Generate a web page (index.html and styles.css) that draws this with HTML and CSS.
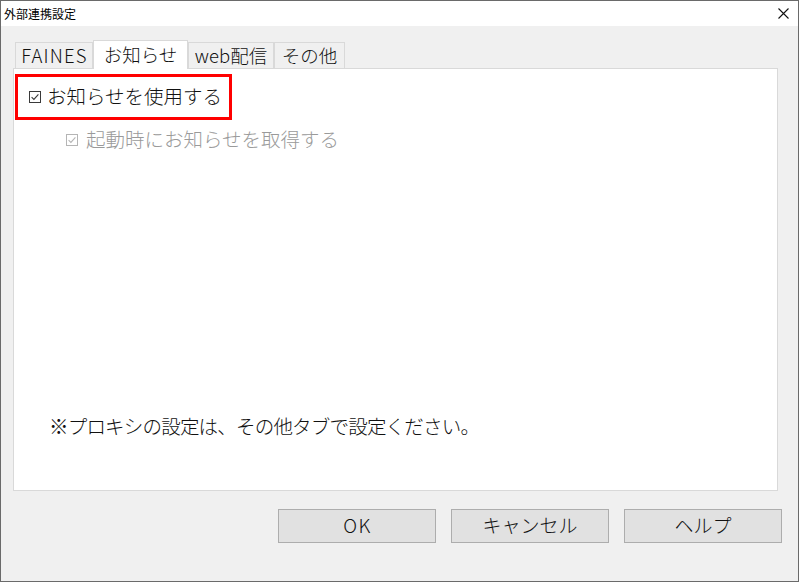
FILE: index.html
```html
<!DOCTYPE html>
<html lang="ja">
<head>
<meta charset="utf-8">
<title>外部連携設定</title>
<link rel="stylesheet" href="styles.css">
</head>
<body>
<div class="window">
  <div class="titlebar">
    <span class="title">外部連携設定</span>
    <svg class="close" width="11" height="11" viewBox="0 0 11 11"><path d="M0.5 0.5 L10.5 10.5 M10.5 0.5 L0.5 10.5" stroke="#111" stroke-width="1.1" fill="none"/></svg>
  </div>
  <div class="content">
    <div class="tabs">
      <div class="tab tab-faines">FAINES</div>
      <div class="tab tab-active">お知らせ</div>
      <div class="tab tab-web">web配信</div>
      <div class="tab tab-other">その他</div>
    </div>
    <div class="panel">
      <div class="highlight">
        <svg class="check" width="12" height="12" viewBox="0 0 12 12"><rect x="0.5" y="0.5" width="11" height="11" fill="none" stroke="currentColor"/><path d="M2.6 6.2 L4.9 8.4 L9.4 3.4" fill="none" stroke="currentColor" stroke-width="1.1"/></svg>
        <span>お知らせを使用する</span>
      </div>
      <div class="subrow">
        <svg class="check" width="12" height="12" viewBox="0 0 12 12"><rect x="0.5" y="0.5" width="11" height="11" fill="none" stroke="currentColor"/><path d="M2.6 6.2 L4.9 8.4 L9.4 3.4" fill="none" stroke="currentColor" stroke-width="1.1"/></svg>
        <span>起動時にお知らせを取得する</span>
      </div>
      <div class="note">※プロキシの設定は、その他タブで設定ください。</div>
    </div>
    <div class="buttons">
      <div class="btn btn-ok">OK</div>
      <div class="btn">キャンセル</div>
      <div class="btn">ヘルプ</div>
    </div>
  </div>
</div>
</body>
</html>
```
FILE: styles.css
```css
html, body {
  margin: 0;
  padding: 0;
  background: #f0f0f0;
}
body {
  font-family: "Noto Sans CJK JP", "Noto Sans", sans-serif;
  font-weight: 300;
  color: #000;
}
.window {
  width: 799px;
  height: 582px;
  box-sizing: border-box;
  border: 1px solid #6a6a6a;
  display: flex;
  flex-direction: column;
  background: #f0f0f0;
}
.titlebar {
  height: 25px;
  flex: 0 0 25px;
  background: #fff;
  display: flex;
  align-items: center;
  justify-content: space-between;
  padding: 0 9px 0 3px;
}
.title {
  font-size: 12px;
  line-height: 14px;
  font-weight: 400;
  color: #000;
}
.close {
  display: block;
}
.content {
  flex: 1;
  padding: 14px 0 0 12px;
  display: flex;
  flex-direction: column;
}
.tabs {
  height: 28px;
  display: flex;
  align-items: flex-end;
  margin-left: 2px;
}
.tab {
  box-sizing: border-box;
  height: 26px;
  border: 1px solid #d9d9d9;
  border-bottom: none;
  background: #f0f0f0;
  display: flex;
  align-items: center;
  justify-content: center;
  font-size: 18.5px;
  line-height: 24px;
  padding-bottom: 1px;
  color: #111;
}
.tab-faines {
  width: 78px;
  letter-spacing: 1.2px;
  padding-left: 1px;
}
.tab-active {
  width: 95px;
  height: 29px;
  margin-bottom: -1px;
  background: #fff;
  position: relative;
  z-index: 1;
  padding-bottom: 3px;
}
.tab-web { width: 86px; }
.tab-other { width: 71px; }
.panel {
  width: 765px;
  height: 423px;
  box-sizing: border-box;
  border: 1px solid #d9d9d9;
  background: #fff;
  display: flex;
  flex-direction: column;
  padding: 5px 0 0 1px;
}
.highlight {
  width: 217px;
  height: 46px;
  box-sizing: border-box;
  border: 3px solid #ff0000;
  display: flex;
  align-items: center;
  gap: 6px;
  padding-left: 11px;
  padding-bottom: 3px;
  font-size: 19.5px;
  line-height: 28px;
  color: #111;
}
.check {
  display: block;
  flex: 0 0 12px;
  color: #3a3a3a;
  margin-top: 2px;
}
.subrow {
  height: 40px;
  display: flex;
  align-items: center;
  gap: 8px;
  margin-left: 51px;
  padding-bottom: 3px;
  box-sizing: border-box;
  font-size: 19.5px;
  line-height: 28px;
  color: #9a9a9a;
}
.subrow .check {
  color: #b5b5b5;
}
.note {
  margin-top: auto;
  margin-left: 34px;
  margin-bottom: 49px;
  font-size: 19.5px;
  line-height: 30px;
  letter-spacing: -0.8px;
  color: #111;
}
.buttons {
  display: flex;
  gap: 15px;
  margin-top: 18px;
  margin-left: 265px;
}
.btn {
  width: 158px;
  height: 34px;
  box-sizing: border-box;
  border: 1px solid #adadad;
  background: #e1e1e1;
  display: flex;
  align-items: center;
  justify-content: center;
  padding-bottom: 2px;
  font-size: 19px;
  line-height: 26px;
  color: #111;
}
.btn-ok {
  letter-spacing: 1.5px;
  padding-left: 1px;
}
```
